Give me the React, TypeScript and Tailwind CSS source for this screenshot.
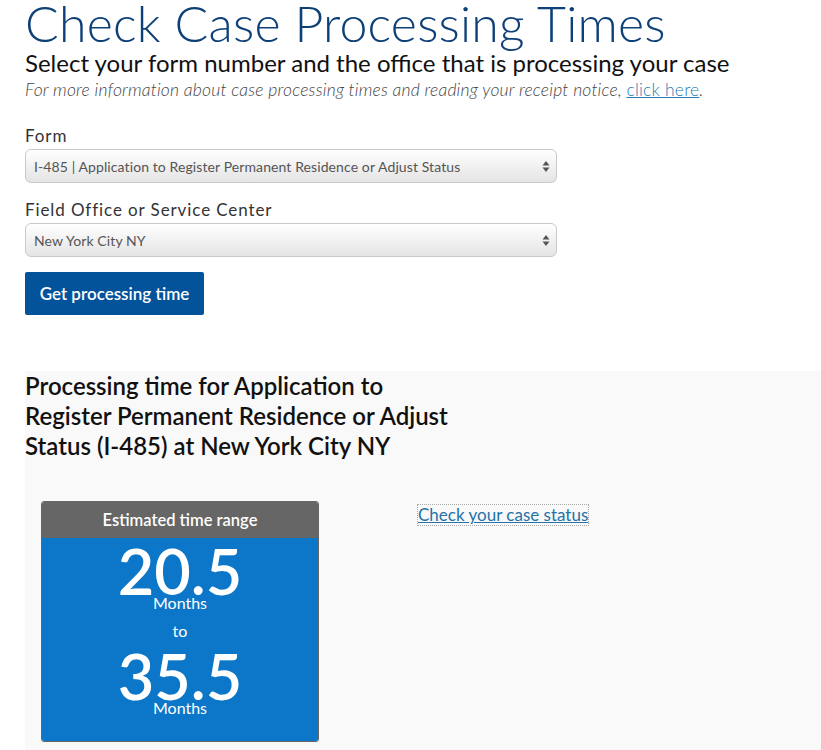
import { useState } from "react";

const forms = [
  "I-485 | Application to Register Permanent Residence or Adjust Status",
  "I-130 | Petition for Alien Relative",
  "I-765 | Application for Employment Authorization",
];

const offices = ["New York City NY", "Brooklyn NY", "Queens NY", "Newark NJ"];

function SelectBox({ value, options, onChange }: { value: string; options: string[]; onChange: (v: string) => void }) {
  return (
    <div className="relative w-[532px] h-[34px] rounded-[6px] border border-[#c9c9c9] bg-gradient-to-b from-[#ffffff] to-[#e4e4e4] shadow-[inset_0_1px_0_#fff]">
      <select
        value={value}
        onChange={(e) => onChange(e.target.value)}
        className="appearance-none w-full h-full bg-transparent pl-[8px] pr-8 text-[14px] tracking-[0.1px] text-[#555] outline-none"
      >
        {options.map((o) => (
          <option key={o}>{o}</option>
        ))}
      </select>
      <svg className="absolute right-[6px] top-[10px] pointer-events-none" width="8" height="13" viewBox="0 0 8 13">
        <path d="M4 1 L7.5 5.5 H0.5 Z" fill="#555" />
        <path d="M4 12 L7.5 7.5 H0.5 Z" fill="#555" />
      </svg>
    </div>
  );
}

export default function App() {
  const [form, setForm] = useState(forms[0]);
  const [office, setOffice] = useState(offices[0]);

  return (
    <div className="w-[821px] h-[750px] overflow-hidden bg-white" style={{ fontFamily: "Lato, 'Open Sans', sans-serif" }}>
      <div className="pl-[25px]">
        <h1 className="text-[50px] leading-[46px] font-light text-[#0e4078] tracking-[0.2px]">Check Case Processing Times</h1>
        <p className="mt-[2px] text-[24px] leading-[30px] text-[#111]">Select your form number and the office that is processing your case</p>
        <p className="mt-[1px] text-[17.5px] leading-[22px] tracking-[0.2px] italic font-light text-[#444]">
          For more information about case processing times and reading your receipt notice,{" "}
          <a href="#" className="not-italic text-[#2b7bb3] underline">click here</a>.
        </p>

        <div className="mt-[25px] text-[17px] leading-[20px] tracking-[0.9px] text-[#333]">Form</div>
        <div className="mt-[3px]">
          <SelectBox value={form} options={forms} onChange={setForm} />
        </div>

        <div className="mt-[17px] text-[17px] leading-[20px] tracking-[0.9px] text-[#333]">Field Office or Service Center</div>
        <div className="mt-[3px]">
          <SelectBox value={office} options={offices} onChange={setOffice} />
        </div>

        <button className="mt-[15px] w-[179px] h-[43px] rounded-[2px] bg-[#02539a] text-white text-[17px] font-semibold">
          Get processing time
        </button>
      </div>

      <div className="ml-[25px] mt-[56px] bg-[#f9f9f9] h-[400px]">
        <h2 className="w-[440px] text-[24px] leading-[30px] font-semibold text-[#111]">
          Processing time for Application to Register Permanent Residence or Adjust Status (I-485) at New York City NY
        </h2>
        <div className="mt-[40px] flex">
          <div className="ml-[16px] w-[278px] h-[241px] rounded-[3px] border border-[#666] overflow-hidden flex flex-col">
            <div className="h-[36px] bg-[#666] text-white text-[16.5px] font-semibold flex items-center justify-center">
              Estimated time range
            </div>
            <div className="flex-1 bg-[#0c77c8] text-white flex flex-col items-center pt-[9px]">
              <div className="text-[63px] leading-[48px] font-semibold">20.5</div>
              <div className="text-[16px] leading-[16px]">Months</div>
              <div className="mt-[12px] text-[16px] leading-[16px]">to</div>
              <div className="mt-[13px] text-[63px] leading-[48px] font-semibold">35.5</div>
              <div className="text-[16px] leading-[16px]">Months</div>
            </div>
          </div>
          <a href="#" className="ml-[99px] mt-[4px] h-[20px] text-[17px] leading-[20px] text-[#2672a8] underline outline-1 outline-dotted outline-[#aaa]">
            Check your case status
          </a>
        </div>
      </div>
    </div>
  );
}
